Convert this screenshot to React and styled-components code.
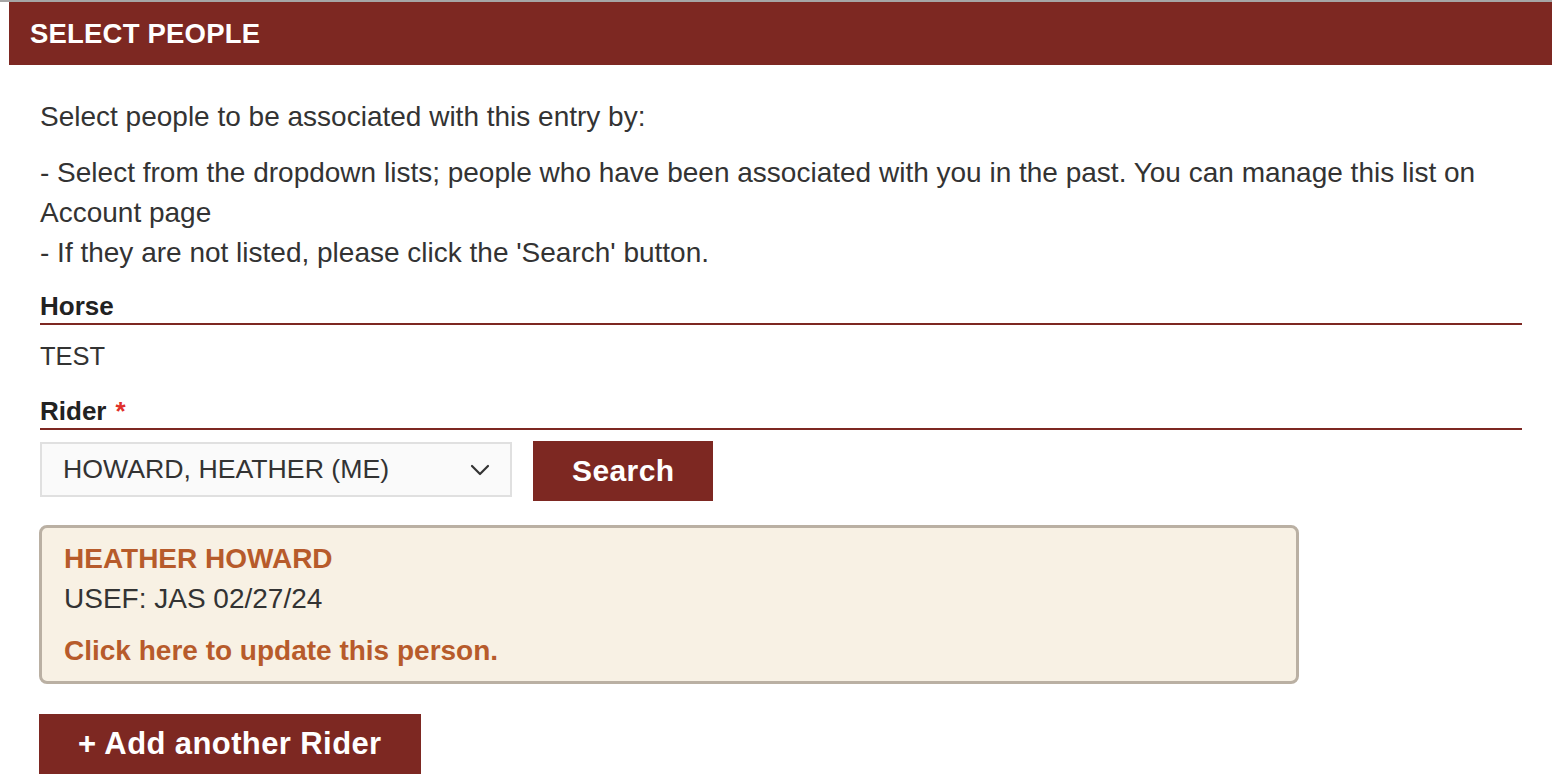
import React from 'react';
import styled, {createGlobalStyle} from 'styled-components';

const GlobalStyle = createGlobalStyle`
  html, body {
    margin: 0;
    padding: 0;
    background: #fff;
  }
  body {
    font-family: "Liberation Sans", Arial, Helvetica, sans-serif;
    color: #333;
  }
`;

const Page = styled.div`
  width: 1552px;
  border-top: 2px solid #a6a6a6;
`;

const Panel = styled.section`
  margin-left: 9px;
`;

const Header = styled.div`
  height: 63px;
  background: #7d2822;
  display: flex;
  align-items: center;
  padding-left: 21px;

  h2 {
    margin: 0;
    color: #fff;
    font-size: 27.5px;
    font-weight: 700;
    letter-spacing: 0.2px;
  }
`;

const Body = styled.div`
  padding: 32px 30px 0 31px;
`;

const Para = styled.p`
  margin: 0 0 16px;
  font-size: 28px;
  line-height: 40px;
`;

const Label = styled.div`
  font-size: 26px;
  font-weight: 700;
  color: #222;
  line-height: 30px;
  padding-bottom: 2px;
  border-bottom: 2px solid #7d2822;
  margin-top: ${p => p.top || 0}px;

  span {
    color: #e0302a;
    margin-left: 9px;
  }
`;

const Value = styled.div`
  font-size: 25.5px;
  line-height: 34px;
  padding-top: 14px;
`;

const Row = styled.div`
  display: flex;
  align-items: flex-start;
  gap: 21px;
  margin-top: 11px;
`;

const SelectBox = styled.div`
  box-sizing: border-box;
  width: 472px;
  height: 55px;
  margin-top: 1px;
  border: 2px solid #e0e0e0;
  background: #fafafa;
  display: flex;
  align-items: center;
  justify-content: space-between;
  padding: 0 20px 0 21px;
  font-size: 26.7px;
  color: #333;

  svg {
    width: 20px;
    height: 12px;
  }
`;

const Button = styled.button`
  border: none;
  background: #7d2822;
  color: #fff;
  font-family: "Liberation Sans", Arial, sans-serif;
  font-weight: 700;
  font-size: ${p => p.size || 30}px;
  height: 60px;
  padding: 0 ${p => p.px || 38}px;
  margin: 0;
  cursor: pointer;
  letter-spacing: 0.4px;
`;

const Card = styled.div`
  box-sizing: border-box;
  width: 1260px;
  margin: 24px 0 0 -1px;
  padding: 11px 22px 10px 22px;
  background: #f8f1e4;
  border: 3px solid #bab0a3;
  border-radius: 8px;
`;

const CardName = styled.div`
  font-size: 28px;
  font-weight: 700;
  color: #b75b2b;
  line-height: 40px;
`;

const CardLine = styled.div`
  font-size: 28px;
  line-height: 40px;
  color: #333;
`;

const CardLink = styled.a`
  display: block;
  margin-top: 12px;
  font-size: 28px;
  font-weight: 700;
  line-height: 40px;
  color: #b75b2b;
  text-decoration: none;
`;

const AddRow = styled.div`
  margin: 30px 0 0 -1px;
`;

const App = () => {
  return (
    <Page>
      <GlobalStyle />
      <Panel>
        <Header>
          <h2>SELECT PEOPLE</h2>
        </Header>
        <Body>
          <Para>Select people to be associated with this entry by:</Para>
          <Para>
            - Select from the dropdown lists; people who have been associated with you in the past. You can manage this list on Account page
            <br />
            - If they are not listed, please click the 'Search' button.
          </Para>
          <Label top={18}>Horse</Label>
          <Value>TEST</Value>
          <Label top={23}>Rider<span>*</span></Label>
          <Row>
            <SelectBox>
              HOWARD, HEATHER (ME)
              <svg viewBox="0 0 20 12" fill="none" stroke="#333" strokeWidth="2.2" strokeLinecap="round" strokeLinejoin="round">
                <polyline points="2,2 10,10 18,2" />
              </svg>
            </SelectBox>
            <Button size={30} px={39}>Search</Button>
          </Row>
          <Card>
            <CardName>HEATHER HOWARD</CardName>
            <CardLine>USEF: JAS 02/27/24</CardLine>
            <CardLink href="#">Click here to update this person.</CardLink>
          </Card>
          <AddRow>
            <Button size={31} px={39}>+ Add another Rider</Button>
          </AddRow>
        </Body>
      </Panel>
    </Page>
  );
};

export default App;
